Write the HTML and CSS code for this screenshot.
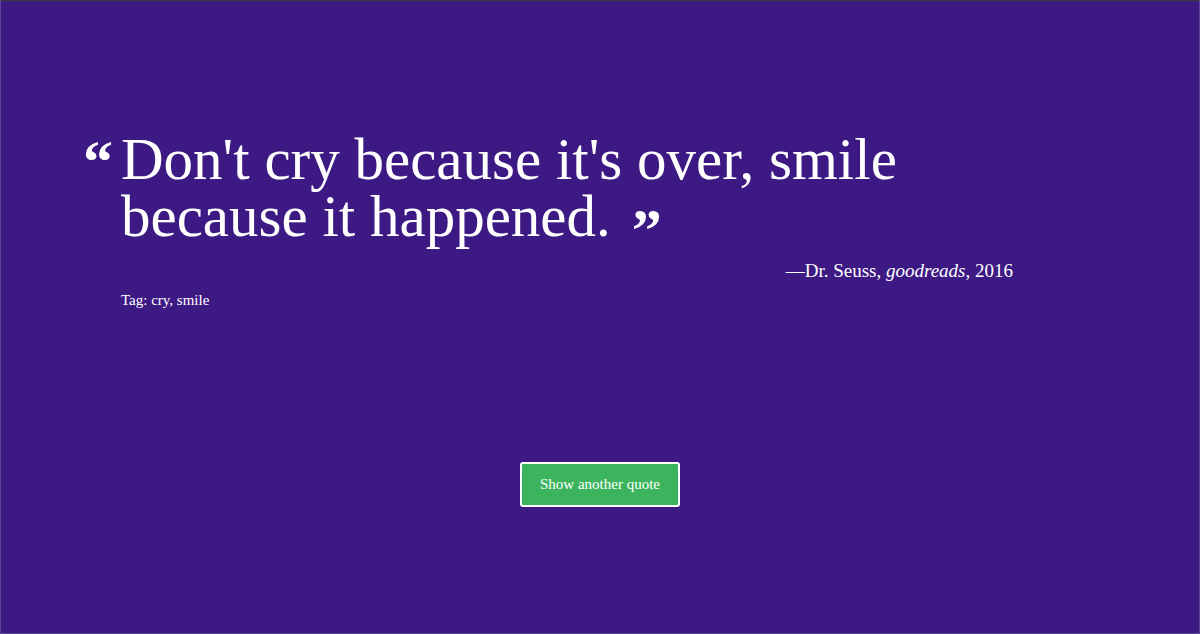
FILE: index.html
```html
<!DOCTYPE html>
<html lang="en">
<head>
<meta charset="utf-8">
<title>Quote</title>
<link rel="stylesheet" href="styles.css">
</head>
<body>
<main class="page">
  <section class="quote-box">
    <blockquote class="quote">
      <span class="qmark qmark-open">&ldquo;</span>
      <p class="quote-text">Don't cry because it's over, smile<br>because it happened.<span class="qmark qmark-close">&rdquo;</span></p>
    </blockquote>
    <p class="source">&mdash;Dr. Seuss, <em>goodreads</em>, 2016</p>
    <p class="tags">Tag: cry, smile</p>
  </section>
  <div class="actions">
    <button class="btn" type="button">Show another quote</button>
  </div>
</main>
</body>
</html>
```
FILE: styles.css
```css
html, body {
  margin: 0;
  padding: 0;
  height: 100%;
}
body {
  background: #3d1984;
  color: #ffffff;
  font-family: "Liberation Serif", "DejaVu Serif", serif;
  border-top: 1px solid #3a3a3a;
  border-left: 1px solid #5b4496;
  border-right: 1px solid #5b4496;
  border-bottom: 1px solid #5b4496;
  box-sizing: border-box;
}
.page {
  display: flex;
  flex-direction: column;
  padding: 130px 0 0 82px;
}
.quote-box {
  width: 930px;
}
.quote {
  margin: 0;
  display: flex;
  align-items: flex-start;
}
.qmark {
  font-weight: bold;
  font-size: 60px;
  line-height: 1;
}
.qmark-open {
  width: 38px;
  flex: none;
  margin-top: 1px;
}
.qmark-close {
  margin-left: 21px;
  vertical-align: -14px;
  line-height: 0;
}
.quote-text {
  margin: 0;
  font-size: 59px;
  line-height: 57px;
}
.source {
  margin: 15px 0 0;
  text-align: right;
  font-size: 19px;
  line-height: 22px;
}
.tags {
  margin: 9px 0 0 38px;
  font-size: 15px;
  line-height: 18px;
}
.actions {
  display: flex;
  justify-content: center;
  margin: 153px 0 0 -82px;
}
.btn {
  width: 160px;
  height: 45px;
  background: #3cb45e;
  color: #fff;
  border: 2px solid #ffffff;
  border-radius: 3px;
  font-family: inherit;
  font-size: 15px;
}
```
